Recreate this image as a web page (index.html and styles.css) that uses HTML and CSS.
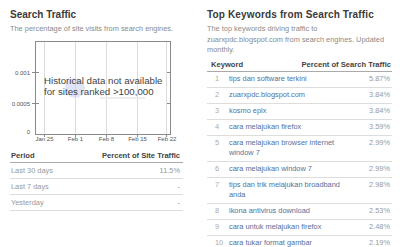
FILE: index.html
```html
<!DOCTYPE html>
<html lang="en">

<head>
    <meta charset="UTF-8">
    <title>Search Traffic</title>
    <link rel="stylesheet" href="styles.css">
</head>

<body>
    <div class="page">
        <!-- left: traffic share -->
        <div class="panel panel-left">
            <h2>Search Traffic</h2>
            <p class="desc">The percentage of site visits from search engines.</p>

            <div class="chart">
                <svg width="173" height="108" viewBox="0 0 173 108">
                    <!-- frame and grid -->
                    <g stroke="#dcdcdc" stroke-width="1">
                        <line x1="34.5" y1="3" x2="34.5" y2="96" />
                        <line x1="65.5" y1="3" x2="65.5" y2="96" />
                        <line x1="96.5" y1="3" x2="96.5" y2="96" />
                        <line x1="127.5" y1="3" x2="127.5" y2="96" />
                        <line x1="156.5" y1="3" x2="156.5" y2="96" />
                    </g>
                    <rect x="25.5" y="3.5" width="135" height="93" fill="none" stroke="#8a8a8a" />
                    <g stroke="#8a8a8a">
                        <line x1="22" y1="34.5" x2="29" y2="34.5" />
                        <line x1="157" y1="34.5" x2="161" y2="34.5" />
                        <line x1="22" y1="65.5" x2="29" y2="65.5" />
                        <line x1="157" y1="65.5" x2="161" y2="65.5" />
                        <line x1="34.5" y1="96" x2="34.5" y2="99" />
                        <line x1="65.5" y1="96" x2="65.5" y2="99" />
                        <line x1="96.5" y1="96" x2="96.5" y2="99" />
                        <line x1="127.5" y1="96" x2="127.5" y2="99" />
                        <line x1="156.5" y1="96" x2="156.5" y2="99" />
                    </g>
                    <circle cx="65" cy="50" r="10" fill="#c9cdf0" opacity="0.55" />
                    <line x1="90" y1="60" x2="135" y2="60" stroke="#eeeeee" stroke-width="2" />
                    <g font-family="Liberation Sans, Arial, sans-serif" font-size="6" fill="#555">
                        <text x="20" y="36.5" text-anchor="end">0.001</text>
                        <text x="20" y="67.5" text-anchor="end">0.0005</text>
                        <text x="20" y="96" text-anchor="end">0</text>
                        <text x="34.5" y="103" text-anchor="middle">Jan 25</text>
                        <text x="65.5" y="103" text-anchor="middle">Feb 1</text>
                        <text x="96.5" y="103" text-anchor="middle">Feb 8</text>
                        <text x="127.5" y="103" text-anchor="middle">Feb 15</text>
                        <text x="157" y="103" text-anchor="middle">Feb 22</text>
                    </g>
                </svg>
                <div class="chart-note">Historical data not available<br>for sites ranked &gt;100,000</div>
            </div>

            <table class="stats">
                <tr>
                    <th>Period</th>
                    <th class="num">Percent of Site Traffic</th>
                </tr>
                <tr>
                    <td>Last 30 days</td>
                    <td class="num">11.5%</td>
                </tr>
                <tr>
                    <td>Last 7 days</td>
                    <td class="num">-</td>
                </tr>
                <tr>
                    <td>Yesterday</td>
                    <td class="num">-</td>
                </tr>
            </table>
        </div>

        <!-- right: keyword list -->
        <div class="panel panel-right">
            <h2>Top Keywords from Search Traffic</h2>
            <p class="desc">The top keywords driving traffic to zuarxpdc.blogspot.com from search engines. Updated monthly.</p>

            <div class="kw-head">
                <span>Keyword</span>
                <span>Percent of Search Traffic</span>
            </div>
            <table class="keywords">
                <colgroup>
                    <col class="col-rank">
                    <col>
                    <col class="col-num">
                </colgroup>
                <tr><td class="rank">1</td><td><a href="#">tips dan software terkini</a></td><td class="num">5.87%</td></tr>
                <tr><td class="rank">2</td><td><a href="#">zuarxpdc.blogspot.com</a></td><td class="num">3.84%</td></tr>
                <tr><td class="rank">3</td><td><a href="#">kosmo eplx</a></td><td class="num">3.84%</td></tr>
                <tr><td class="rank">4</td><td><a href="#">cara melajukan firefox</a></td><td class="num">3.59%</td></tr>
                <tr><td class="rank">5</td><td><a href="#">cara melajukan browser internet window 7</a></td><td class="num">2.99%</td></tr>
                <tr><td class="rank">6</td><td><a href="#">cara melajukan window 7</a></td><td class="num">2.99%</td></tr>
                <tr><td class="rank">7</td><td><a href="#">tips dan trik melajukan broadband anda</a></td><td class="num">2.98%</td></tr>
                <tr><td class="rank">8</td><td><a href="#">ikona antivirus download</a></td><td class="num">2.53%</td></tr>
                <tr><td class="rank">9</td><td><a href="#">cara untuk melajukan firefox</a></td><td class="num">2.48%</td></tr>
                <tr><td class="rank">10</td><td><a href="#">cara tukar format gambar</a></td><td class="num">2.19%</td></tr>
            </table>
        </div>
    </div>
</body>

</html>
```

FILE: styles.css
```css
* {
    margin: 0;
    padding: 0;
    box-sizing: border-box;
}

body {
    font-family: "Liberation Sans", Arial, sans-serif;
    background-color: #FFFFFF;
    color: #777;
}

.page {
    display: flex;
    gap: 24px;
    padding: 9px 0 0 10px;
}

.panel-left {
    width: 173px;
}

.panel-right {
    width: 185px;
}

.panel h2 {
    font-size: 10px;
    font-weight: bold;
    color: #3a3a3a;
    line-height: 12px;
}

.panel-right h2 {
    letter-spacing: 0.15px;
}

.desc {
    font-size: 7.4px;
    line-height: 10.5px;
    color: #8a8a8a;
    margin-top: 3px;
}

.chart {
    position: relative;
    margin-top: 3px;
}

.chart svg {
    display: block;
}

/* message laid over the empty plot */
.chart-note {
    position: absolute;
    left: 34px;
    top: 37px;
    font-size: 9.7px;
    line-height: 11px;
    color: #444;
    white-space: nowrap;
}

.stats {
    width: 100%;
    border-collapse: collapse;
    margin-top: 5px;
    font-size: 7.4px;
}

.stats th {
    text-align: left;
    font-weight: bold;
    color: #444;
    font-size: 7.6px;
    line-height: 10px;
    padding: 0 0 1px 1px;
    border-bottom: 1px solid #aaa;
}

.stats td {
    padding: 3px 0 2px 1px;
    line-height: 10px;
    border-bottom: 1px solid #ddd;
    color: #999;
}

.stats .num {
    text-align: right;
    padding-right: 3px;
}

/* keyword list */
.kw-head {
    display: flex;
    justify-content: space-between;
    margin-top: 4px;
    padding: 0 1px 1px 4px;
    font-size: 7.6px;
    line-height: 10px;
    font-weight: bold;
    color: #444;
    border-bottom: 1px solid #aaa;
}

.keywords {
    width: 100%;
    table-layout: fixed;
    border-collapse: collapse;
    font-size: 7.4px;
}

.col-rank {
    width: 22px;
}

.col-num {
    width: 34px;
}

.keywords td {
    padding: 2px 0 3px 0;
    line-height: 10px;
    border-bottom: 1px solid #ddd;
    vertical-align: top;
    color: #999;
}

.keywords .rank {
    padding-left: 8px;
    color: #aaa;
}

.keywords .num {
    text-align: right;
    padding-right: 2px;
}

.keywords a {
    color: #56709a;
    text-decoration: none;
}
```
